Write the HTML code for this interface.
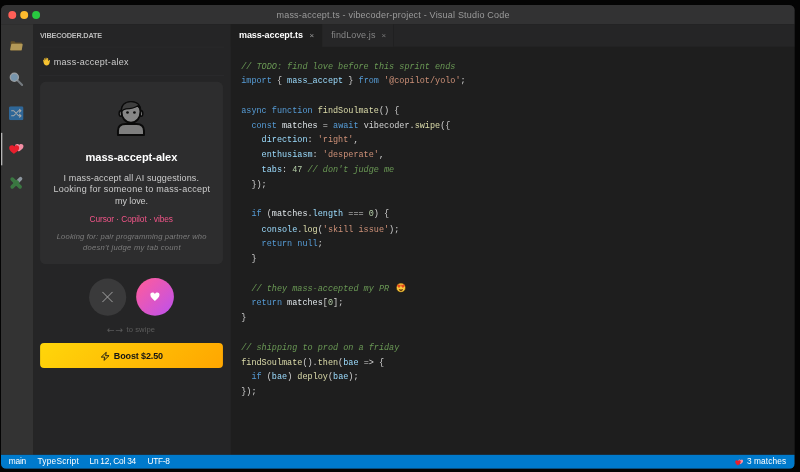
<!DOCTYPE html>
<html lang="en">
<head>
<meta charset="utf-8">
<title>mass-accept.ts - vibecoder-project - Visual Studio Code</title>
<style>
*{box-sizing:border-box;margin:0;padding:0}
html,body{width:800px;height:472px;overflow:hidden;background:#040404}
body{font-family:"Liberation Sans",sans-serif;position:relative}
#win{position:absolute;left:1.0px;top:4.8px;width:1197.8px;height:700px;transform:scale(0.6625);transform-origin:0 0;background:#1e1e1e;border-radius:8px;overflow:hidden;filter:blur(.55px)}
#win div{position:absolute}
.t{white-space:nowrap;line-height:1}
.ic svg{display:block;width:100%;height:100%}
#titlebar{left:0;top:0;width:1197.8px;height:28.7px;background:#323233}
#tl1,#tl2,#tl3{width:12px;height:12px;border-radius:50%;top:8.87px}
#tl1{left:10.83px;background:#ff5f57}
#tl2{left:28.72px;background:#febc2e}
#tl3{left:46.83px;background:#28c840}
#act{left:0;top:28.7px;width:49px;height:650.09px;background:#333333}
#actind{left:0;top:192.60px;width:2.2px;height:48.91px;background:#b4b4b4}
#side{left:49px;top:28.7px;width:298.02px;height:650.09px;background:#252526}
#ln1{left:58.11px;top:63.25px;width:278.49px;height:1.06px;background:#2c2c2d}
#ln2{left:58.11px;top:105.96px;width:278.49px;height:1.06px;background:#2d2d2e}
#card{left:58.72px;top:115.92px;width:276.38px;height:275.32px;background:#2d2d2e;border-radius:8px}
#bno{left:132.68px;top:412.98px;width:56.00px;height:56.15px;background:#3a3a3b;border-radius:50%}
#byes{left:204.08px;top:411.77px;width:57.36px;height:57.36px;background:linear-gradient(135deg,#fb5ba0 10%,#c352e6 90%);border-radius:50%}
#boost{left:58.72px;top:510.04px;width:276.38px;height:37.89px;background:linear-gradient(135deg,#ffd60a,#ffa600);border-radius:6px}
#tabs{left:347.02px;top:28.7px;width:850.78px;height:34.39px;background:#252526}
#tab1{left:347.02px;top:28.68px;width:137.51px;height:34.42px;background:#1e1e1e}
#tab2{left:485.43px;top:28.68px;width:107.77px;height:34.42px;background:#262627;border-right:1px solid #1f1f20}
#status{left:0;top:678.79px;width:1197.8px;height:21.21px;background:#007acc}
pre{position:absolute;left:362.57px;top:81.56px;font-family:"Liberation Mono","DejaVu Sans Mono",monospace;font-size:12.83px;line-height:22.36px;color:#d4d4d4;white-space:pre}
.c{color:#6a9955;font-style:italic}.k{color:#569cd6}.v{color:#9cdcfe}.s{color:#ce9178}.f{color:#dcdcaa}.n{color:#b5cea8}.m{color:#dfe6ea}
pre svg{width:15.4px;height:15.4px;vertical-align:-3px;margin-left:2.6px}
</style>
</head>
<body>
<div id="win">
<div id="titlebar"></div><div id="tl1"></div><div id="tl2"></div><div id="tl3"></div>
<div id="t_title" class="t" style="left:415.85px;top:8.71px;font-size:13.6px;letter-spacing:0.305px;color:#9b9b9b">mass-accept.ts - vibecoder-project - Visual Studio Code</div>
<div id="act"></div><div id="actind"></div>
<div class="ic" style="left:12.98px;top:53.58px;width:20.23px;height:15.55px;opacity:.66"><svg viewBox="0 0 27 20" preserveAspectRatio="none"><path d="M2 2.200C2 1.400 2.600 .8 3.400 .8h6.200l2.200 2.400h11.400c.8 0 1.400.6 1.400 1.400V17.600c0 .8-.6 1.400-1.400 1.400H3.400C2.600 19 2 18.400 2 17.600z" fill="#7d5f22"/><path d="M3.200 7.400c.2-.8.800-1.400 1.700-1.400H25.200c.9 0 1.500.8 1.300 1.700L24.300 17.700c-.2.800-.8 1.300-1.700 1.300H2.300c-.9 0-1.500-.8-1.300-1.700z" fill="#f5cf6a"/></svg></div>
<div class="ic" style="left:12.38px;top:101.43px;width:21.89px;height:21.74px;opacity:.64"><svg viewBox="0 0 22 22" preserveAspectRatio="none"><path d="M12.500 12.500l7.500 7.500" stroke="#9aa3ab" stroke-width="3.200" stroke-linecap="round"/><circle cx="8.200" cy="8.200" r="6.200" fill="#9ccdf2" stroke="#d3dbe2" stroke-width="2"/></svg></div>
<div class="ic" style="left:12.38px;top:153.06px;width:22.04px;height:20.83px;opacity:.58"><svg viewBox="0 0 22 22" preserveAspectRatio="none"><rect x="0" y="0" width="22" height="22" rx="2.500" fill="#2c8ce0"/><path d="M4 7h3.200l7.300 8H18M4 15h3.200l7.300-8H18M16 4.800L18.200 7 16 9.200M16 12.800l2.200 2.200-2.200 2.200" stroke="#fff" stroke-width="1.600" fill="none" stroke-linecap="round" stroke-linejoin="round"/></svg></div>
<div class="ic" style="left:12.38px;top:207.55px;width:22.34px;height:17.06px;"><svg viewBox="0 0 24 18" preserveAspectRatio="none"><path d="M16.600 3.600c1.400-2.800 7-2.200 7 1.800 0 3.800-4.400 6.200-7.600 8.600-2.800-2.400-6.400-5-6.400-8.600 0-4 5.600-4.600 7-1.800z" fill="#f48ea4"/><path d="M8.600 5.800c1.600-3.200 8-2.600 8 2 0 4.400-5 7-8.600 9.800C4.800 14.800.4 12.200.4 7.800c0-4.600 6.600-5.200 8.200-2z" fill="#e81f2d"/></svg></div>
<div class="ic" style="left:12.38px;top:258.11px;width:21.74px;height:21.43px;opacity:.66"><svg viewBox="0 0 22 22" preserveAspectRatio="none"><path d="M13.500 8.500l4.200-4.200" stroke="#b9c8d4" stroke-width="5.600" stroke-linecap="round"/><path d="M5 5l12 12M5 17l6.500-6.500" stroke="#3f9b49" stroke-width="5.600" stroke-linecap="round"/><circle cx="11" cy="11" r="4.600" fill="#3f9b49"/></svg></div>
<div id="side"></div>
<div id="t_h3" class="t" style="left:58.72px;top:41.25px;font-size:11px;letter-spacing:-0.285px;color:#bbbbbb;font-weight:bold">VIBECODER.DATE</div>
<div id="ln1"></div>
<div class="ic" style="left:62.64px;top:79.40px;width:12.23px;height:12.68px;"><svg viewBox="0 0 14 14" preserveAspectRatio="none"><path d="M.8 5.200c-.3-.9.900-1.500 1.500-.7l1.300 1.700L2.400 2.600c-.3-1 1-1.500 1.500-.6l1.500 3L4.900 1.300c-.1-1 1.300-1.300 1.600-.3l1 3.800.2-3c.1-1 1.500-1 1.600 0l.4 4.600 1.300-1.700c.6-.8 1.900-.2 1.500.8-.5 1.400-.6 2.600-.8 3.900-.4 2.600-2.400 4.100-5 4.100-2.700 0-4.200-1.600-5-4z" fill="#f7c331"/></svg></div>
<div id="t_who" class="t" style="left:79.70px;top:78.83px;font-size:13.6px;letter-spacing:0.415px;color:#cccccc">mass-accept-alex</div>
<div id="ln2"></div>
<div id="card"></div>
<div class="ic" style="left:174.34px;top:143.40px;width:44.38px;height:54.79px;"><svg viewBox="0 0 44 54" preserveAspectRatio="none"><path d="M2.500 52.300V46.500c0-6.800 4.200-10.300 11.500-10.300h16c7.300 0 11.500 3.500 11.500 10.300v5.800z" fill="#7e7e7e" stroke="#0a0a0a" stroke-width="3" stroke-linejoin="round"/><ellipse cx="6.600" cy="20.500" rx="2.300" ry="4" fill="#868686" stroke="#0a0a0a" stroke-width="2.200"/><ellipse cx="37.400" cy="20.500" rx="2.300" ry="4" fill="#868686" stroke="#0a0a0a" stroke-width="2.200"/><path d="M22 3.200C30.500 3.200 36.300 8.700 36.300 17.500c0 9.200-5.800 16.700-14.300 16.700S7.700 26.700 7.700 17.500C7.700 8.700 13.500 3.200 22 3.200z" fill="#868686" stroke="#0a0a0a" stroke-width="3"/><path d="M7.900 17.500C7.400 7.700 13.500 3 22 3c8 0 13.400 4 14.200 11.400-1.700-1.800-3-3.400-3.900-5.300-4.800 3.500-11.300 4.500-17.800 4.500-3 .6-5 1.900-6.600 3.900z" fill="#3e3e3e" stroke="#0a0a0a" stroke-width="1.800" stroke-linejoin="round"/><circle cx="16.800" cy="19" r="2" fill="#0d0d0d"/><circle cx="27.200" cy="19" r="2" fill="#0d0d0d"/></svg></div>
<div id="t_nm" class="t" style="left:127.55px;top:223.36px;font-size:16.8px;letter-spacing:-0.081px;color:#ffffff;font-weight:bold">mass-accept-alex</div>
<div id="t_b1" class="t" style="left:94.34px;top:254.15px;font-size:13.6px;letter-spacing:0.205px;color:#cccccc">I mass-accept all AI suggestions.</div>
<div id="t_b2" class="t" style="left:79.25px;top:272.41px;font-size:13.6px;letter-spacing:0.404px;color:#cccccc">Looking for someone to mass-accept</div>
<div id="t_b3" class="t" style="left:172.08px;top:289.47px;font-size:13.6px;letter-spacing:-0.116px;color:#cccccc">my love.</div>
<div id="t_tags" class="t" style="left:133.58px;top:317.64px;font-size:12.6px;letter-spacing:-0.119px;color:#f25589">Cursor · Copilot · vibes</div>
<div id="t_l1" class="t" style="left:84.15px;top:344.23px;font-size:11.5px;letter-spacing:0.217px;color:#7c7c7c;font-style:italic">Looking for: pair programming partner who</div>
<div id="t_l2" class="t" style="left:123.77px;top:361.44px;font-size:11.5px;letter-spacing:0.403px;color:#7c7c7c;font-style:italic">doesn't judge my tab count</div>
<div id="bno"></div><div class="ic" style="left:152.00px;top:432.30px;width:17.51px;height:17.51px;"><svg viewBox="0 0 18 18" preserveAspectRatio="none"><path d="M1.500 1.500l15 15M16.500 1.500l-15 15" stroke="#a6a6a6" stroke-width="1.500" stroke-linecap="round"/></svg></div>
<div id="byes"></div><div class="ic" style="left:225.36px;top:432.75px;width:14.64px;height:14.04px;"><svg viewBox="0 0 20 19" preserveAspectRatio="none"><path d="M10 18.500C5.500 14 .5 10.500.5 5.800.5 1 7 -.5 10 4.200 13-.5 19.500 1 19.500 5.800c0 4.700-5 8.200-9.500 12.700z" fill="#fff"/></svg></div>
<div id="t_hinta" class="t" style="left:160.00px;top:482.64px;font-size:14px;letter-spacing:1.286px;color:#5a5a5a;font-family:'DejaVu Sans',sans-serif">←→</div><div id="t_hint" class="t" style="left:189.43px;top:484.45px;font-size:11.5px;letter-spacing:0.119px;color:#5c5c5c">to swipe</div>
<div id="boost"></div><div class="ic" style="left:150.34px;top:522.57px;width:14.49px;height:14.79px;"><svg viewBox="0 0 15 15" preserveAspectRatio="none"><path d="M9.200 1.200L1.400 8.600h5.400l-1.200 5.200 8-7.400H8.200z" fill="none" stroke="#151515" stroke-width="1.400" stroke-linejoin="round"/></svg></div>
<div id="t_boost" class="t" style="left:170.26px;top:523.88px;font-size:13.6px;letter-spacing:-0.190px;color:#151515;font-weight:bold">Boost $2.50</div>
<div id="tabs"></div><div id="tab1"></div><div id="tab2"></div>
<div id="t_tab1" class="t" style="left:359.25px;top:38.83px;font-size:13.6px;letter-spacing:-0.125px;color:#ffffff;font-weight:bold">mass-accept.ts</div><div id="t_tab1x" class="t" style="left:465.66px;top:40.18px;font-size:12px;letter-spacing:0.000px;color:#9a9a9a">×</div><div id="t_tab2" class="t" style="left:498.49px;top:38.83px;font-size:13.6px;letter-spacing:0.179px;color:#858585">findLove.js</div><div id="t_tab2x" class="t" style="left:574.34px;top:40.18px;font-size:12px;letter-spacing:0.000px;color:#777777">×</div>
<pre><span class="c">// TODO: find love before this sprint ends</span>
<span class="k">import</span> { <span class="v">mass_accept</span> } <span class="k">from</span> <span class="s">'@copilot/yolo'</span>;

<span class="k">async function</span> <span class="f">findSoulmate</span>() {
  <span class="k">const</span> <span class="m">matches</span> = <span class="k">await</span> vibecoder.<span class="f">swipe</span>({
    <span class="v">direction</span>: <span class="s">'right'</span>,
    <span class="v">enthusiasm</span>: <span class="s">'desperate'</span>,
    <span class="v">tabs</span>: <span class="n">47</span> <span class="c">// don't judge me</span>
  });

  <span class="k">if</span> (<span class="m">matches</span>.<span class="v">length</span> === <span class="n">0</span>) {
    <span class="v">console</span>.<span class="f">log</span>(<span class="s">'skill issue'</span>);
    <span class="k">return null</span>;
  }

  <span class="c">// they mass-accepted my PR </span><svg viewBox="0 0 14 14"><circle cx="7" cy="7" r="6.3" fill="#f8c83e" stroke="#3a2703" stroke-width=".8"/><path d="M4.300 7.400C2.800 6.100 1.900 5.200 1.900 4.100c0-1.500 1.800-1.900 2.400-.6.600-1.300 2.400-.9 2.400.6 0 1.100-.9 2-2.400 3.300z" fill="#e84a1c"/><path d="M9.700 7.400C8.200 6.100 7.300 5.200 7.300 4.100c0-1.500 1.800-1.900 2.400-.6.600-1.300 2.400-.9 2.400.6 0 1.100-.9 2-2.400 3.300z" fill="#e84a1c"/><path d="M4 8.800c1.800.9 4.200.9 6 0-.4 1.900-1.600 2.900-3 2.900s-2.600-1-3-2.900z" fill="#6b3d0c"/></svg>
  <span class="k">return</span> <span class="m">matches</span>[<span class="n">0</span>];
}

<span class="c">// shipping to prod on a friday</span>
<span class="f">findSoulmate</span>().<span class="f">then</span>(<span class="v">bae</span> =&gt; {
  <span class="k">if</span> (<span class="v">bae</span>) <span class="f">deploy</span>(<span class="v">bae</span>);
});
</pre>
<div id="status"></div>
<div id="t_s1" class="t" style="left:11.70px;top:683.22px;font-size:12.6px;letter-spacing:-0.294px;color:#ffffff">main</div><div id="t_s2" class="t" style="left:55.09px;top:683.22px;font-size:12.6px;letter-spacing:0.307px;color:#ffffff">TypeScript</div><div id="t_s3" class="t" style="left:133.58px;top:683.22px;font-size:12.6px;letter-spacing:-0.363px;color:#ffffff">Ln 12, Col 34</div><div id="t_s4" class="t" style="left:221.13px;top:683.22px;font-size:12.6px;letter-spacing:-0.431px;color:#ffffff">UTF-8</div>
<div class="ic" style="left:1107.92px;top:684.53px;width:12.53px;height:10.57px;"><svg viewBox="0 0 24 18" preserveAspectRatio="none"><path d="M16.600 3.600c1.400-2.800 7-2.200 7 1.800 0 3.800-4.400 6.200-7.600 8.600-2.800-2.400-6.400-5-6.400-8.600 0-4 5.600-4.600 7-1.800z" fill="#f48ea4"/><path d="M8.600 5.800c1.600-3.200 8-2.600 8 2 0 4.400-5 7-8.600 9.800C4.800 14.800.4 12.200.4 7.800c0-4.600 6.600-5.200 8.200-2z" fill="#e81f2d"/></svg></div>
<div id="t_s5" class="t" style="left:1125.89px;top:683.22px;font-size:12.6px;letter-spacing:0.161px;color:#ffffff">3 matches</div>
</div>
</body>
</html>
